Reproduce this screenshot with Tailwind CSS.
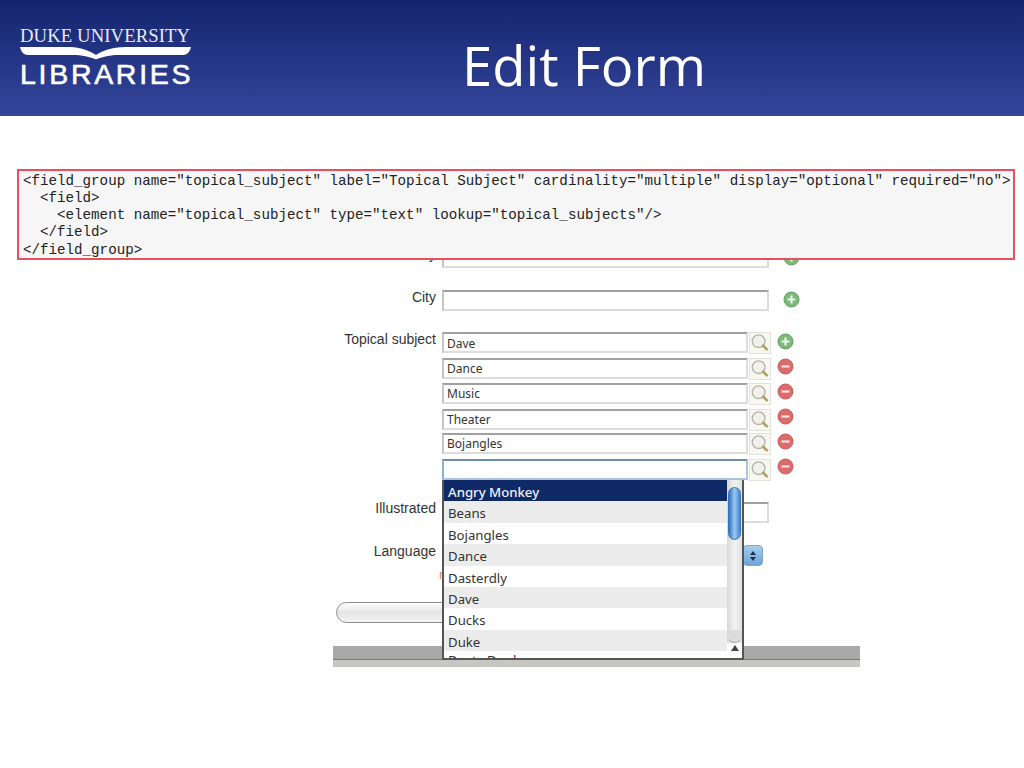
<!DOCTYPE html>
<html lang="en">
<head>
<meta charset="utf-8">
<title>Edit Form</title>
<script src="https://cdn.jsdelivr.net/npm/@tailwindcss/browser@4"></script>
</head>
<body class="m-0 bg-white">
<div class="relative w-[1024px] h-[768px] overflow-hidden bg-white font-['Liberation_Sans',sans-serif]">

  <header class="h-[116px] flex bg-gradient-to-b from-[#14246f] via-[#1f307f] via-35% to-[#35459a]">
    <div class="w-[191px] ml-[20px] mt-[26px] text-white shrink-0">
      <div class="font-['Liberation_Serif',serif] text-[18.7px] leading-[19px] tracking-[0.1px] whitespace-nowrap text-[#e8ebf6]">DUKE UNIVERSITY</div>
      <svg class="block mt-[2px]" width="171" height="13" viewBox="0 0 171 13"><path d="M0 0H50C60 0 70 4 76 8C82 4 92 0 105 0H171C170 4 168 8 163 8H100C90 8 82 10 76 12.500C70 10 62 8 52 8H8C3 8 1 4 0 0Z" fill="#fff"/></svg>
      <div class="mt-[2px] text-[28.5px] leading-[25px] font-normal tracking-[2.7px] whitespace-nowrap [-webkit-text-stroke:0.6px_white]">LIBRARIES</div>
    </div>
    <h1 class="ml-[251px] mt-[30px] font-['Open_Sans',sans-serif] text-[54.4px] leading-[70px] font-normal text-white whitespace-nowrap">Edit Form</h1>
  </header>

  <main class="ml-[333px] w-[527px] pt-[131px] text-[14px] text-[#333]">
    <div class="flex items-start gap-[6px] h-[21px]">
      <label class="w-[103px] text-right leading-[14px]">Country</label>
      <div class="w-[327px] h-[21px] border-2 border-[#dcdcdc] border-l-[#c4c4c4] border-t-[#a0a0a0] bg-white"></div>
      <svg class="ml-[8px] mt-[2px]" width="17" height="17" viewBox="0 0 17 17"><circle cx="8.500" cy="8.500" r="7.500" fill="#7db97a" stroke="#5f9f5f"/><path d="M8.500 4.500v8M4.500 8.500h8" stroke="#e7f5e5" stroke-width="2.200"/></svg>
    </div>
    <div class="flex items-start gap-[6px] h-[21px] mt-[22px]">
      <label class="w-[103px] text-right leading-[14px]">City</label>
      <div class="w-[327px] h-[21px] border-2 border-[#dcdcdc] border-l-[#c4c4c4] border-t-[#a0a0a0] bg-white"></div>
      <svg class="ml-[8px] mt-[1px]" width="17" height="17" viewBox="0 0 17 17"><circle cx="8.500" cy="8.500" r="7.500" fill="#7db97a" stroke="#5f9f5f"/><path d="M8.500 4.500v8M4.500 8.500h8" stroke="#e7f5e5" stroke-width="2.200"/></svg>
    </div>

    <div class="flex items-start gap-[6px] mt-[21px]">
      <label class="w-[103px] text-right leading-[14px]">Topical subject</label>
      <div class="flex flex-col font-['Noto_Sans',sans-serif] text-[12px] text-[#333]">
        <div class="flex items-center h-[21px]">
          <div class="w-[306px] h-[21px] border-2 border-[#dcdcdc] border-l-[#c4c4c4] border-t-[#a0a0a0] bg-white pl-[3px] leading-[19px]">Dave</div>
          <svg class="ml-[1px] bg-[#f8f7f0] border border-[#e2e2dc]" width="22" height="22" viewBox="0 0 22 22"><circle cx="9.500" cy="9" r="7" fill="#f1f1ec" stroke="#b5b5ae" stroke-width="1.500"/><path d="M14.500 14l4 4" stroke="#b3a267" stroke-width="3" stroke-linecap="round"/></svg>
          <svg class="ml-[6px] -mt-[2px]" width="17" height="17" viewBox="0 0 17 17"><circle cx="8.500" cy="8.500" r="7.500" fill="#7db97a" stroke="#5f9f5f"/><path d="M8.500 4.500v8M4.500 8.500h8" stroke="#e7f5e5" stroke-width="2.200"/></svg>
        </div>
        <div class="flex items-center h-[21px] mt-[5px]">
          <div class="w-[306px] h-[21px] border-2 border-[#dcdcdc] border-l-[#c4c4c4] border-t-[#a0a0a0] bg-white pl-[3px] leading-[17px]">Dance</div>
          <svg class="ml-[1px] bg-[#f8f7f0] border border-[#e2e2dc]" width="22" height="22" viewBox="0 0 22 22"><circle cx="9.500" cy="9" r="7" fill="#f1f1ec" stroke="#b5b5ae" stroke-width="1.500"/><path d="M14.500 14l4 4" stroke="#b3a267" stroke-width="3" stroke-linecap="round"/></svg>
          <svg class="ml-[6px] -mt-[5px]" width="17" height="17" viewBox="0 0 17 17"><circle cx="8.500" cy="8.500" r="7.500" fill="#dc6c6c" stroke="#c75a5a"/><path d="M4.500 8.500h8" stroke="#f8e2e2" stroke-width="2.200"/></svg>
        </div>
        <div class="flex items-center h-[21px] mt-[4px]">
          <div class="w-[306px] h-[21px] border-2 border-[#dcdcdc] border-l-[#c4c4c4] border-t-[#a0a0a0] bg-white pl-[3px] leading-[17px]">Music</div>
          <svg class="ml-[1px] bg-[#f8f7f0] border border-[#e2e2dc]" width="22" height="22" viewBox="0 0 22 22"><circle cx="9.500" cy="9" r="7" fill="#f1f1ec" stroke="#b5b5ae" stroke-width="1.500"/><path d="M14.500 14l4 4" stroke="#b3a267" stroke-width="3" stroke-linecap="round"/></svg>
          <svg class="ml-[6px] -mt-[5px]" width="17" height="17" viewBox="0 0 17 17"><circle cx="8.500" cy="8.500" r="7.500" fill="#dc6c6c" stroke="#c75a5a"/><path d="M4.500 8.500h8" stroke="#f8e2e2" stroke-width="2.200"/></svg>
        </div>
        <div class="flex items-center h-[21px] mt-[5px]">
          <div class="w-[306px] h-[21px] border-2 border-[#dcdcdc] border-l-[#c4c4c4] border-t-[#a0a0a0] bg-white pl-[3px] leading-[17px]">Theater</div>
          <svg class="ml-[1px] bg-[#f8f7f0] border border-[#e2e2dc]" width="22" height="22" viewBox="0 0 22 22"><circle cx="9.500" cy="9" r="7" fill="#f1f1ec" stroke="#b5b5ae" stroke-width="1.500"/><path d="M14.500 14l4 4" stroke="#b3a267" stroke-width="3" stroke-linecap="round"/></svg>
          <svg class="ml-[6px] -mt-[6px]" width="17" height="17" viewBox="0 0 17 17"><circle cx="8.500" cy="8.500" r="7.500" fill="#dc6c6c" stroke="#c75a5a"/><path d="M4.500 8.500h8" stroke="#f8e2e2" stroke-width="2.200"/></svg>
        </div>
        <div class="flex items-center h-[21px] mt-[3px]">
          <div class="w-[306px] h-[21px] border-2 border-[#dcdcdc] border-l-[#c4c4c4] border-t-[#a0a0a0] bg-white pl-[3px] leading-[18px]">Bojangles</div>
          <svg class="ml-[1px] bg-[#f8f7f0] border border-[#e2e2dc]" width="22" height="22" viewBox="0 0 22 22"><circle cx="9.500" cy="9" r="7" fill="#f1f1ec" stroke="#b5b5ae" stroke-width="1.500"/><path d="M14.500 14l4 4" stroke="#b3a267" stroke-width="3" stroke-linecap="round"/></svg>
          <svg class="ml-[6px] -mt-[5px]" width="17" height="17" viewBox="0 0 17 17"><circle cx="8.500" cy="8.500" r="7.500" fill="#dc6c6c" stroke="#c75a5a"/><path d="M4.500 8.500h8" stroke="#f8e2e2" stroke-width="2.200"/></svg>
        </div>
        <div class="flex items-center h-[21px] mt-[5px]">
          <div class="w-[306px] h-[21px] border-2 border-[#a9c4dc] border-l-[#8fb0cc] border-t-[#6f8ca8] bg-white"></div>
          <svg class="ml-[1px] bg-[#f8f7f0] border border-[#e2e2dc]" width="22" height="22" viewBox="0 0 22 22"><circle cx="9.500" cy="9" r="7" fill="#f1f1ec" stroke="#b5b5ae" stroke-width="1.500"/><path d="M14.500 14l4 4" stroke="#b3a267" stroke-width="3" stroke-linecap="round"/></svg>
          <svg class="ml-[6px] -mt-[6px]" width="17" height="17" viewBox="0 0 17 17"><circle cx="8.500" cy="8.500" r="7.500" fill="#dc6c6c" stroke="#c75a5a"/><path d="M4.500 8.500h8" stroke="#f8e2e2" stroke-width="2.200"/></svg>
        </div>
      </div>
    </div>

    <div class="flex items-start gap-[6px] mt-[22px] h-[21px]">
      <label class="w-[103px] text-right leading-[12px]">Illustrated</label>
      <div class="w-[327px] h-[21px] border-2 border-[#dcdcdc] border-l-[#c4c4c4] border-t-[#a0a0a0] bg-white"></div>
    </div>
    <div class="flex items-start gap-[6px] mt-[22px] h-[21px]">
      <label class="w-[103px] text-right leading-[12px]">Language</label>
      <div class="w-[321px] h-[21px] flex justify-end">
        <div class="w-[20px] h-[21px] rounded-[4px] border border-[#7fa6cc] bg-gradient-to-b from-[#a6cdee] to-[#6ba4d8] flex flex-col items-center justify-center gap-[2px]">
          <div class="w-0 h-0 border-x-[3px] border-x-transparent border-b-[4px] border-b-[#1e2f4d]"></div>
          <div class="w-0 h-0 border-x-[3px] border-x-transparent border-t-[4px] border-t-[#1e2f4d]"></div>
        </div>
      </div>
    </div>
    <div class="h-[36px] pl-[106px] text-[#d98a5c] text-[13px] leading-[18px]">r</div>
    <div class="ml-[3px] w-[160px] h-[21px] rounded-full border-[1.5px] border-[#8d8d8d] bg-gradient-to-b from-white via-[#e4e4e4] to-[#f4f4f4]"></div>
    <div class="mt-[23px] h-[14px] bg-[#a9a9a9] border-b border-b-[#777]"></div>
    <div class="h-[7px] bg-[#c6c6c2]"></div>
  </main>

  <pre class="absolute left-[17px] top-[169px] w-[998px] h-[91px] m-0 border-2 border-[#e6505f] bg-[#f6f6f6] pl-[4px] pt-[1.500px] font-['Liberation_Mono',monospace] text-[14.2px] leading-[17.3px] text-[#222] overflow-hidden">&lt;field_group name="topical_subject" label="Topical Subject" cardinality="multiple" display="optional" required="no"&gt;
  &lt;field&gt;
    &lt;element name="topical_subject" type="text" lookup="topical_subjects"/&gt;
  &lt;/field&gt;
&lt;/field_group&gt;</pre>

  <div class="absolute left-[442px] top-[480px] w-[302px] h-[180px] flex bg-white border-x-2 border-b-2 border-[#555] overflow-hidden font-['Noto_Sans',sans-serif] text-[13.2px] text-[#333]">
    <ul class="w-[283px] shrink-0 list-none m-0 p-0">
      <li class="h-[21.400px] pl-[4px] leading-[24px] bg-[#0f2a66] text-[#eef2ff] font-medium">Angry Monkey</li>
      <li class="h-[21.400px] pl-[4px] leading-[24px] bg-[#ececec]">Beans</li>
      <li class="h-[21.400px] pl-[4px] leading-[24px] bg-white">Bojangles</li>
      <li class="h-[21.400px] pl-[4px] leading-[24px] bg-[#ececec]">Dance</li>
      <li class="h-[21.400px] pl-[4px] leading-[24px] bg-white">Dasterdly</li>
      <li class="h-[21.400px] pl-[4px] leading-[24px] bg-[#ececec]">Dave</li>
      <li class="h-[21.400px] pl-[4px] leading-[24px] bg-white">Ducks</li>
      <li class="h-[21.400px] pl-[4px] leading-[24px] bg-[#ececec]">Duke</li>
      <li class="h-[21.400px] pl-[4px] leading-[19px] bg-white">Dusty Dunk</li>
    </ul>
    <div class="relative w-[15px] bg-gradient-to-r from-[#d8d8d8] via-[#f2f2f2] to-[#e2e2e2]">
      <div class="absolute left-[1px] top-[7px] w-[13px] h-[53px] rounded-full bg-gradient-to-r from-[#2f72c8] via-[#9cc8f0] to-[#3f86d8] border border-[#3a74b8]"></div>
      <div class="absolute left-0 right-0 top-[163px] h-[16px] bg-white"></div>
      <div class="absolute left-0 right-0 top-[150px] h-[13px] rounded-b-full bg-[#dcdcdc] border-b border-[#aaa]"></div>
      <div class="absolute left-[4px] top-[165px] w-0 h-0 border-x-[4px] border-x-transparent border-b-[6px] border-b-[#444]"></div>
    </div>
  </div>
</div>
</body>
</html>
